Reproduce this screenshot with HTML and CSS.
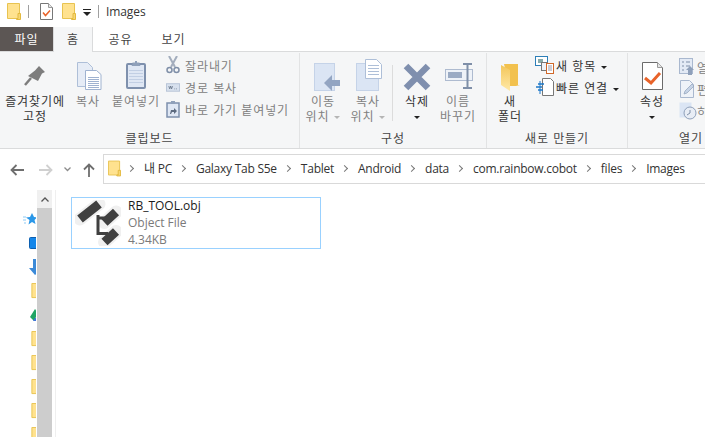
FILE: index.html
```html
<!DOCTYPE html>
<html lang="ko">
<head>
<meta charset="utf-8">
<title>Images</title>
<link rel="stylesheet" href="styles.css">
</head>
<body>
<svg class="defs" width="0" height="0">
  <defs>
    <symbol id="folder" viewBox="0 0 14 17">
      <path d="M.5.5h12v15H.5z" fill="#ffe28f" stroke="#e8c350"/>
      <path d="M11 10.500h2.500v6H9.500v-1H11z" fill="#f7d774" stroke="#e3b93f" stroke-width="1"/>
    </symbol>
    <symbol id="doccheck" viewBox="0 0 13 17">
      <path d="M.5.5h8l4 4v12H.5z" fill="#fff" stroke="#777"/>
      <path d="M8.500.5v4h4" fill="#e8e8e8" stroke="#999"/>
      <path d="M3 9.500l2.500 3L10 7.500" fill="none" stroke="#e8632a" stroke-width="1.500"/>
    </symbol>
  </defs>
</svg>

<header class="titlebar">
  <svg class="qa-folder"><use href="#folder"/></svg>
  <span class="qa-sep"></span>
  <svg class="qa-doc"><use href="#doccheck"/></svg>
  <svg class="qa-folder2"><use href="#folder"/></svg>
  <span class="qa-drop"><i class="caret dark"></i></span>
  <span class="qa-sep second"></span>
  <span class="win-title">Images</span>
</header>

<nav class="tabs">
  <span class="tab file">파일</span>
  <span class="tab active">홈</span>
  <span class="tab share">공유</span>
  <span class="tab view">보기</span>
</nav>

<section class="ribbon">
  <div class="group g1">
    <div class="group-body">
      <div class="big w70 on">
        <svg class="big-icon" width="34" height="34" viewBox="0 0 34 34">
          <path d="M21 8l6 6-3 1.500-4 7.500-10-5 7-5.500z" fill="#7d7d7d"/>
          <path d="M13 20l-6 7" stroke="#7d7d7d" stroke-width="2.500"/>
        </svg>
        <span>즐겨찾기에<br>고정</span>
      </div>
      <div class="big w36 off">
        <svg class="big-icon" width="34" height="34" viewBox="0 0 34 34">
          <path d="M6.500 4.500h10l5 5v19h-15z" fill="#e6ecf6" stroke="#aebfd8"/>
          <path d="M14.500 12.500h11l4.500 4v15H14.500z" fill="#fff" stroke="#9fb2d0"/>
          <path d="M17 19.500h11M17 21.500h11M17 23.500h11M17 25.500h11M17 27.500h11M17 29.500h11" stroke="#9fb2d0"/>
        </svg>
        <span>복사</span>
      </div>
      <div class="big w60 off">
        <svg class="big-icon" width="34" height="34" viewBox="0 0 34 34">
          <rect x="8" y="6" width="18" height="24" rx="1" fill="#dfe7f4" stroke="#7e90ad" stroke-width="2"/>
          <path d="M13.500 6V4.500h2.500V3h2v1.500h2.500V6l1 2h-9z" fill="#8fa0ba"/>
          <path d="M10 12.500h14M10 15.500h14M10 18.500h14M10 21.500h14M10 24.500h14" stroke="#c2cfe4"/>
        </svg>
        <span>붙여넣기</span>
      </div>
      <div class="small-col">
        <div class="small off">
          <svg width="14" height="18" viewBox="0 0 14 18"><path d="M3 0l6 11M11 0L5 11" stroke="#a3adbd" stroke-width="2" fill="none"/><circle cx="3.500" cy="14" r="2.500" fill="none" stroke="#7f8fa8" stroke-width="1.500"/><circle cx="10.500" cy="14" r="2.500" fill="none" stroke="#7f8fa8" stroke-width="1.500"/></svg>
          <span>잘라내기</span>
        </div>
        <div class="small off">
          <svg width="15" height="12" viewBox="0 0 15 12"><rect x=".5" y="2.500" width="14" height="8" fill="#d8e1ee" stroke="#b6c3d6"/><path d="M3 5l1 3 1-3 1 3 1-3M9 8h.8M11 8h.8" stroke="#5d6b80" fill="none" stroke-width=".8"/></svg>
          <span>경로 복사</span>
        </div>
        <div class="small off">
          <svg width="14" height="17" viewBox="0 0 14 17"><rect x="1" y="2" width="12" height="14" fill="#dfe7f4" stroke="#7e90ad" stroke-width="1.500"/><rect x="5" y="0" width="4" height="3" fill="#8fa0ba"/><path d="M4 13l1-4h3V7l3 3-3 3v-2H6l-1 2z" fill="#5d6b80"/></svg>
          <span>바로 가기 붙여넣기</span>
        </div>
      </div>
    </div>
    <div class="group-label">클립보드</div>
  </div>

  <div class="group g2">
    <div class="group-body">
      <div class="big w46 off">
        <svg class="big-icon" width="34" height="34" viewBox="0 0 34 34">
          <rect x="8.500" y="5.500" width="20" height="27" fill="#dbe5f4" stroke="#c5d3e8"/>
          <path d="M18 25l8-8v5h8v6h-8v5z" fill="#93a5c2"/>
        </svg>
        <span>이동<br>위치<i class="caret pale"></i></span>
      </div>
      <div class="big w44 off">
        <svg class="big-icon" width="34" height="34" viewBox="0 0 34 34">
          <rect x="5.500" y="5.500" width="22" height="27" fill="#dbe5f4" stroke="#c5d3e8"/>
          <path d="M14.500 1.500h11l5 5v14h-16z" fill="#fff" stroke="#aebfd8"/>
          <path d="M17 7.500h11M17 10.500h11M17 13.500h11M17 16.500h11" stroke="#aebfd8"/>
        </svg>
        <span>복사<br>위치<i class="caret pale"></i></span>
      </div>
      <div class="v-rule"></div>
      <div class="big w48 on">
        <svg class="big-icon" width="34" height="34" viewBox="0 0 34 34">
          <path d="M6 8l22 22M28 8L6 30" stroke="#7f8fae" stroke-width="6.500" fill="none"/>
        </svg>
        <span>삭제<br><i class="caret dark solo"></i></span>
      </div>
      <div class="big w34 off">
        <svg class="big-icon" width="34" height="34" viewBox="0 0 34 34">
          <rect x="4.500" y="11.500" width="27" height="11" fill="#eef2f8" stroke="#aebbd0"/>
          <rect x="7" y="14" width="14" height="6" fill="#9babc4"/>
          <path d="M22 6h9M22 30h9M26.500 6v24" stroke="#7f8fa8" stroke-width="2" fill="none"/>
        </svg>
        <span>이름<br>바꾸기</span>
      </div>
    </div>
    <div class="group-label">구성</div>
  </div>

  <div class="group g3">
    <div class="group-body">
      <div class="big w46 on">
        <svg class="big-icon" width="34" height="34" viewBox="0 0 34 34">
          <defs><linearGradient id="fg" x1="0" y1="0" x2="0" y2="1"><stop offset="0" stop-color="#f3c65a"/><stop offset="1" stop-color="#ffe9a8"/></linearGradient></defs>
          <path d="M11 6h14v21h2l-4 1H16z" fill="#f2c14e"/>
          <path d="M8 7l9 5v21l-9-6z" fill="url(#fg)"/>
        </svg>
        <span>새<br>폴더</span>
      </div>
      <div class="small-col narrow">
        <div class="small on">
          <svg width="20" height="18" viewBox="0 0 20 18"><rect x=".5" y=".5" width="12" height="9" fill="#fff" stroke="#2d7fb8"/><rect x="3" y="3" width="5" height="4" fill="#8aa"/><rect x="6.500" y="6.500" width="6" height="8" fill="#eef2f8" stroke="#777"/><rect x="11.500" y="7.500" width="7" height="10" fill="#fff" stroke="#d0682a"/><path d="M13 10h4M13 12h4M13 14h4" stroke="#99a"/></svg>
          <span>새 항목<i class="caret dark"></i></span>
        </div>
        <div class="small on">
          <svg width="20" height="18" viewBox="0 0 20 18"><path d="M7.500.5h8l3 3v14h-11z" fill="#fff" stroke="#777"/><path d="M3 6h6M1 9h6M3 12h5" stroke="#1e78c8" stroke-width="1.500"/><path d="M5 3v13" stroke="#1e78c8"/></svg>
          <span>빠른 연결<i class="caret dark"></i></span>
        </div>
      </div>
    </div>
    <div class="group-label">새로 만들기</div>
  </div>

  <div class="group g4">
    <div class="group-body">
      <div class="big w48 on">
        <svg class="big-icon" width="34" height="34" viewBox="0 0 34 34">
          <path d="M7.500 4.500h15l5 5v22h-20z" fill="#fff" stroke="#6b6b6b"/>
          <path d="M22.500 4.500v5h5" fill="#e6e6e6" stroke="#9a9a9a"/>
          <path d="M10 20l6 5 9-10" fill="none" stroke="#e8632a" stroke-width="3"/>
        </svg>
        <span>속성<br><i class="caret dark solo"></i></span>
      </div>
      <div class="small-col clipped">
        <div class="small off">
          <svg width="18" height="18" viewBox="0 0 18 18"><rect x=".5" y=".5" width="13" height="15" fill="#e3eaf5" stroke="#a9b8cf"/><path d="M3 4h2M7 4h4M3 8h2M7 8h4M3 12h2" stroke="#7f8fa8"/><path d="M9 17v-5H7l4-4 4 4h-2v5z" fill="#8fa0ba"/></svg>
          <span>열기</span>
        </div>
        <div class="small off">
          <svg width="18" height="18" viewBox="0 0 18 18"><path d="M1.500.5h9l4 4v13h-13z" fill="#eef2f8" stroke="#a9b8cf"/><path d="M5 14l1-3 7-7 2 2-7 7z" fill="#c6d3e6" stroke="#8fa0ba" stroke-width=".7"/></svg>
          <span>편집</span>
        </div>
        <div class="small off">
          <svg width="18" height="18" viewBox="0 0 18 18"><rect x=".5" y=".5" width="12" height="15" fill="#dbe5f4"/><circle cx="11" cy="11" r="6" fill="#e8edf5" stroke="#8fa0ba"/><path d="M11 8v3l-3 2" stroke="#7f8fa8" fill="none"/></svg>
          <span>히스토리</span>
        </div>
      </div>
    </div>
    <div class="group-label">열기</div>
  </div>
</section>

<div class="navbar">
  <button class="nav-btn back" aria-label="뒤로">
    <svg width="14" height="12" viewBox="0 0 14 12"><path d="M6.500 1L1.500 6l5 5M2 6h12" fill="none" stroke="#6e6e6e" stroke-width="1.800"/></svg>
  </button>
  <button class="nav-btn forward" aria-label="앞으로">
    <svg width="14" height="12" viewBox="0 0 14 12"><path d="M7.500 1l5 5-5 5M12 6H0" fill="none" stroke="#d0d0d0" stroke-width="1.800"/></svg>
  </button>
  <button class="nav-btn recent" aria-label="최근 위치">
    <svg width="7" height="5" viewBox="0 0 7 5"><path d="M.5 .5l3 3 3-3" fill="none" stroke="#8c8c8c" stroke-width="1.300"/></svg>
  </button>
  <button class="nav-btn up" aria-label="위로">
    <svg width="12" height="14" viewBox="0 0 12 14"><path d="M1 6.500l5-5 5 5M6 2v12" fill="none" stroke="#6e6e6e" stroke-width="1.800"/></svg>
  </button>
  <div class="address">
    <svg class="addr-folder"><use href="#folder"/></svg>
    <span class="chev"></span><span>내 PC</span>
    <span class="chev"></span><span>Galaxy Tab S5e</span>
    <span class="chev"></span><span>Tablet</span>
    <span class="chev"></span><span>Android</span>
    <span class="chev"></span><span>data</span>
    <span class="chev"></span><span>com.rainbow.cobot</span>
    <span class="chev"></span><span>files</span>
    <span class="chev"></span><span>Images</span>
  </div>
</div>

<main class="explorer">
  <aside class="sidebar">
    <div class="tree">
      <svg class="peek" width="16" height="16" viewBox="0 0 16 16"><path d="M9 2l2 4 3 .500-2.500 2.500 1 4L9 11l-3.500 2.500L6.500 9 3 6.500 7 6z" fill="#2a97e8"/><path d="M0 6h3M0 9h3M1 12h2" stroke="#8ccaf5"/></svg>
      <svg class="peek shift6" width="16" height="16" viewBox="0 0 16 16"><rect x=".5" y="2.500" width="15" height="11" rx="1" fill="#1587ea" stroke="#0c5fb0"/></svg>
      <svg class="peek shift6" width="16" height="16" viewBox="0 0 16 16"><path d="M4 0h4v9h6l-8 7-6-7h4z" fill="#3c8ad8"/></svg>
      <svg class="peek folder"><use href="#folder"/></svg>
      <svg class="peek shift7" width="16" height="16" viewBox="0 0 16 16"><path d="M0 10l5-8 3 4-4 8z" fill="#1fa463"/><path d="M3 14l2-3h10v3z" fill="#4273db"/></svg>
      <svg class="peek folder"><use href="#folder"/></svg>
      <svg class="peek folder"><use href="#folder"/></svg>
      <svg class="peek folder"><use href="#folder"/></svg>
      <svg class="peek folder"><use href="#folder"/></svg>
      <svg class="peek folder"><use href="#folder"/></svg>
    </div>
    <div class="scrollbar">
      <div class="scroll-up"><svg width="8" height="5" viewBox="0 0 8 5"><path d="M.5 4.500L4 1l3.500 3.500" fill="none" stroke="#555" stroke-width="1.300"/></svg></div>
      <div class="scroll-thumb"></div>
    </div>
  </aside>
  <div class="content">
    <article class="tile">
      <svg class="tile-icon" width="46" height="46" viewBox="0 0 46 46">
        <path d="M5 19L24 4M29.500 22.500L41 12M29.500 42L41 31.500" fill="none" stroke="#f0f0f0" stroke-width="13" stroke-linecap="round"/>
        <path d="M23 15v18.500h10M23 18h7" fill="none" stroke="#404040" stroke-width="3"/>
        <path d="M5 19L24 4M29.500 22.500L41 12M29.500 42L41 31.500" fill="none" stroke="#404040" stroke-width="9"/>
      </svg>
      <div class="tile-text">
        <div class="name">RB_TOOL.obj</div>
        <div class="meta">Object File</div>
        <div class="meta">4.34KB</div>
      </div>
    </article>
  </div>
</main>
</body>
</html>
```

FILE: styles.css
```css
* { box-sizing: border-box; }
html, body { margin: 0; padding: 0; height: 100%; overflow: hidden; background: #fff; }
body {
  width: 705px;
  height: 437px;
  font-family: "Noto Sans CJK KR", "Noto Sans", sans-serif;
  font-size: 12px;
  line-height: 15px;
  color: #3c3c3c;
  display: flex;
  flex-direction: column;
}
.defs { display: block; height: 0; }
svg { display: block; flex: none; }

.caret {
  display: inline-block;
  width: 0;
  height: 0;
  border-left: 3px solid transparent;
  border-right: 3px solid transparent;
  border-top: 3px solid #444;
  margin-left: 5px;
  vertical-align: middle;
}
.caret.pale { border-top-color: #b5b5b5; }
.caret.dark { border-top-color: #222; }
.caret.solo { margin-left: 0; }

/* title bar */
.titlebar { height: 27px; display: flex; align-items: center; flex: none; padding-bottom: 4px; }
.qa-folder { width: 14px; height: 17px; margin-left: 7px; }
.qa-sep { width: 1px; height: 13px; background: #a0a0a0; margin-left: 7px; }
.qa-sep.second { margin-left: 7px; }
.qa-doc { width: 13px; height: 17px; margin-left: 11px; }
.qa-folder2 { width: 14px; height: 17px; margin-left: 9px; }
.qa-drop { width: 8px; margin-left: 7px; display: flex; flex-direction: column; align-items: center; border-top: 1px solid #222; padding-top: 2px; height: 6px; }
.qa-drop .caret { margin: 0; border-left-width: 4px; border-right-width: 4px; border-top-width: 4px; }
.win-title { margin-left: 7px; font-family: "Open Sans", sans-serif; font-size: 12px; letter-spacing: -.1px; color: #333; }

/* tabs */
.tabs { height: 25px; display: flex; flex: none; position: relative; z-index: 1; letter-spacing: .9px; }
.tab { display: flex; align-items: center; justify-content: center; height: 24px; color: #444; padding-bottom: 2px; }
.tab.file { width: 53px; background: #5c5654; color: #fff; }
.tab.active { width: 40px; height: 25px; background: #f5f6f7; border: 1px solid #dadbdc; border-bottom: 0; border-top: 0; }
.tab.share { width: 55px; }
.tab.view { width: 51px; }

/* ribbon */
.ribbon {
  height: 98px;
  flex: none;
  display: flex;
  background: #f5f6f7;
  border-top: 1px solid #dadbdc;
  border-bottom: 1px solid #dadbdc;
  margin-top: -1px;
  letter-spacing: .9px;
}
.group { display: flex; flex-direction: column; border-right: 1px solid #e2e3e4; margin-top: 1px; flex: none; }
.g1 { width: 300px; }
.g2 { width: 187px; }
.g3 { width: 141px; }
.g4 { flex: 1; min-width: 0; overflow: hidden; border-right: 0; }
.group-body { flex: 1; display: flex; min-height: 0; }
.group-label { height: 18px; text-align: center; color: #444; line-height: 16px; }
.g4 .group-label { text-align: left; padding-left: 51px; }

.big { display: flex; flex-direction: column; align-items: center; text-align: center; padding-top: 5px; flex: none; white-space: nowrap; }
.big-icon { margin-bottom: 1px; }
.big.on { color: #333; }
.big.off { color: #808080; }
.w70 { width: 70px; }
.w36 { width: 36px; }
.w60 { width: 60px; }
.w46 { width: 46px; }
.w44 { width: 44px; }
.w48 { width: 48px; }
.w34 { width: 36px; margin-left: -1px; }
.v-rule { width: 1px; height: 56px; background: #dcdcdc; margin: 12px 0 0 2px; flex: none; }

.small-col { display: flex; flex-direction: column; flex: none; padding-top: 1px; }
.small-col.narrow { margin-left: 2px; padding-top: 1px; }
.small-col.clipped { margin-left: 3px; padding-top: 3px; }
.small { display: flex; align-items: center; height: 22px; white-space: nowrap; }
.small svg { margin-right: 5px; }
.small.off { color: #808080; }
.small.on { color: #333; }
.small-col.narrow svg { margin-right: 1px; }
.small-col.clipped svg { margin-right: 0; }
.small-col:not(.narrow):not(.clipped) svg { width: 14px; margin-right: 5px; }

/* navigation */
.navbar { height: 41px; flex: none; display: flex; align-items: center; overflow: hidden; }
.nav-btn { background: none; border: 0; padding: 0; display: flex; align-items: center; justify-content: center; flex: none; height: 20px; }
.nav-btn.back { width: 16px; margin-left: 9px; }
.nav-btn.forward { width: 14px; margin-left: 14px; }
.nav-btn.recent { width: 8px; margin-left: 10px; }
.nav-btn.up { width: 12px; margin-left: 12px; }
.address {
  margin: 0 -2px 1px 8px;
  height: 30px;
  flex: 1;
  min-width: 0;
  border: 1px solid #d9d9d9;
  display: flex;
  align-items: center;
  font-family: "Open Sans", "Noto Sans CJK KR", sans-serif;
  font-size: 12px;
  letter-spacing: -.25px;
  color: #333;
  white-space: nowrap;
  padding: 0 0 2px 4px;
}
.addr-folder { width: 13px; height: 17px; margin-right: 4px; }
.chev { width: 5px; height: 5px; border-top: 1px solid #777; border-right: 1px solid #777; transform: rotate(45deg); margin: 0 11px 0 3px; flex: none; }
.address span:not(.chev) { margin-right: 5px; }

/* explorer */
.explorer { flex: 1; display: flex; min-height: 0; overflow: hidden; }
.sidebar { width: 56px; flex: none; display: flex; border-right: 1px solid #efefef; }
.tree { width: 37px; flex: none; overflow: hidden; display: flex; flex-direction: column; gap: 8px; padding: 21px 0 0 23px; clip-path: inset(0 1px 0 0); }
.peek { width: 16px; height: 16px; flex: none; }
.peek.folder { width: 14px; height: 16px; margin-left: 8px; }
.peek.shift6 { margin-left: 6px; }
.peek.shift7 { margin-left: 7px; }
.scrollbar { width: 15px; flex: none; display: flex; flex-direction: column; background: #f0f0f0; }
.scroll-up { height: 18px; display: flex; align-items: center; justify-content: center; flex: none; }
.scroll-thumb { flex: 1; background: #cdcdcd; }

.content { flex: 1; min-width: 0; padding: 7px 0 0 15px; }
.tile { width: 250px; height: 52px; border: 1px solid #99d1ff; display: flex; align-items: center; padding-left: 3px; }
.tile-text { margin-left: 7px; font-family: "Open Sans", sans-serif; font-size: 12px; line-height: 17px; margin-top: -1px; }
.name { color: #1a1a1a; }
.meta { color: #7a7a7a; }
```
